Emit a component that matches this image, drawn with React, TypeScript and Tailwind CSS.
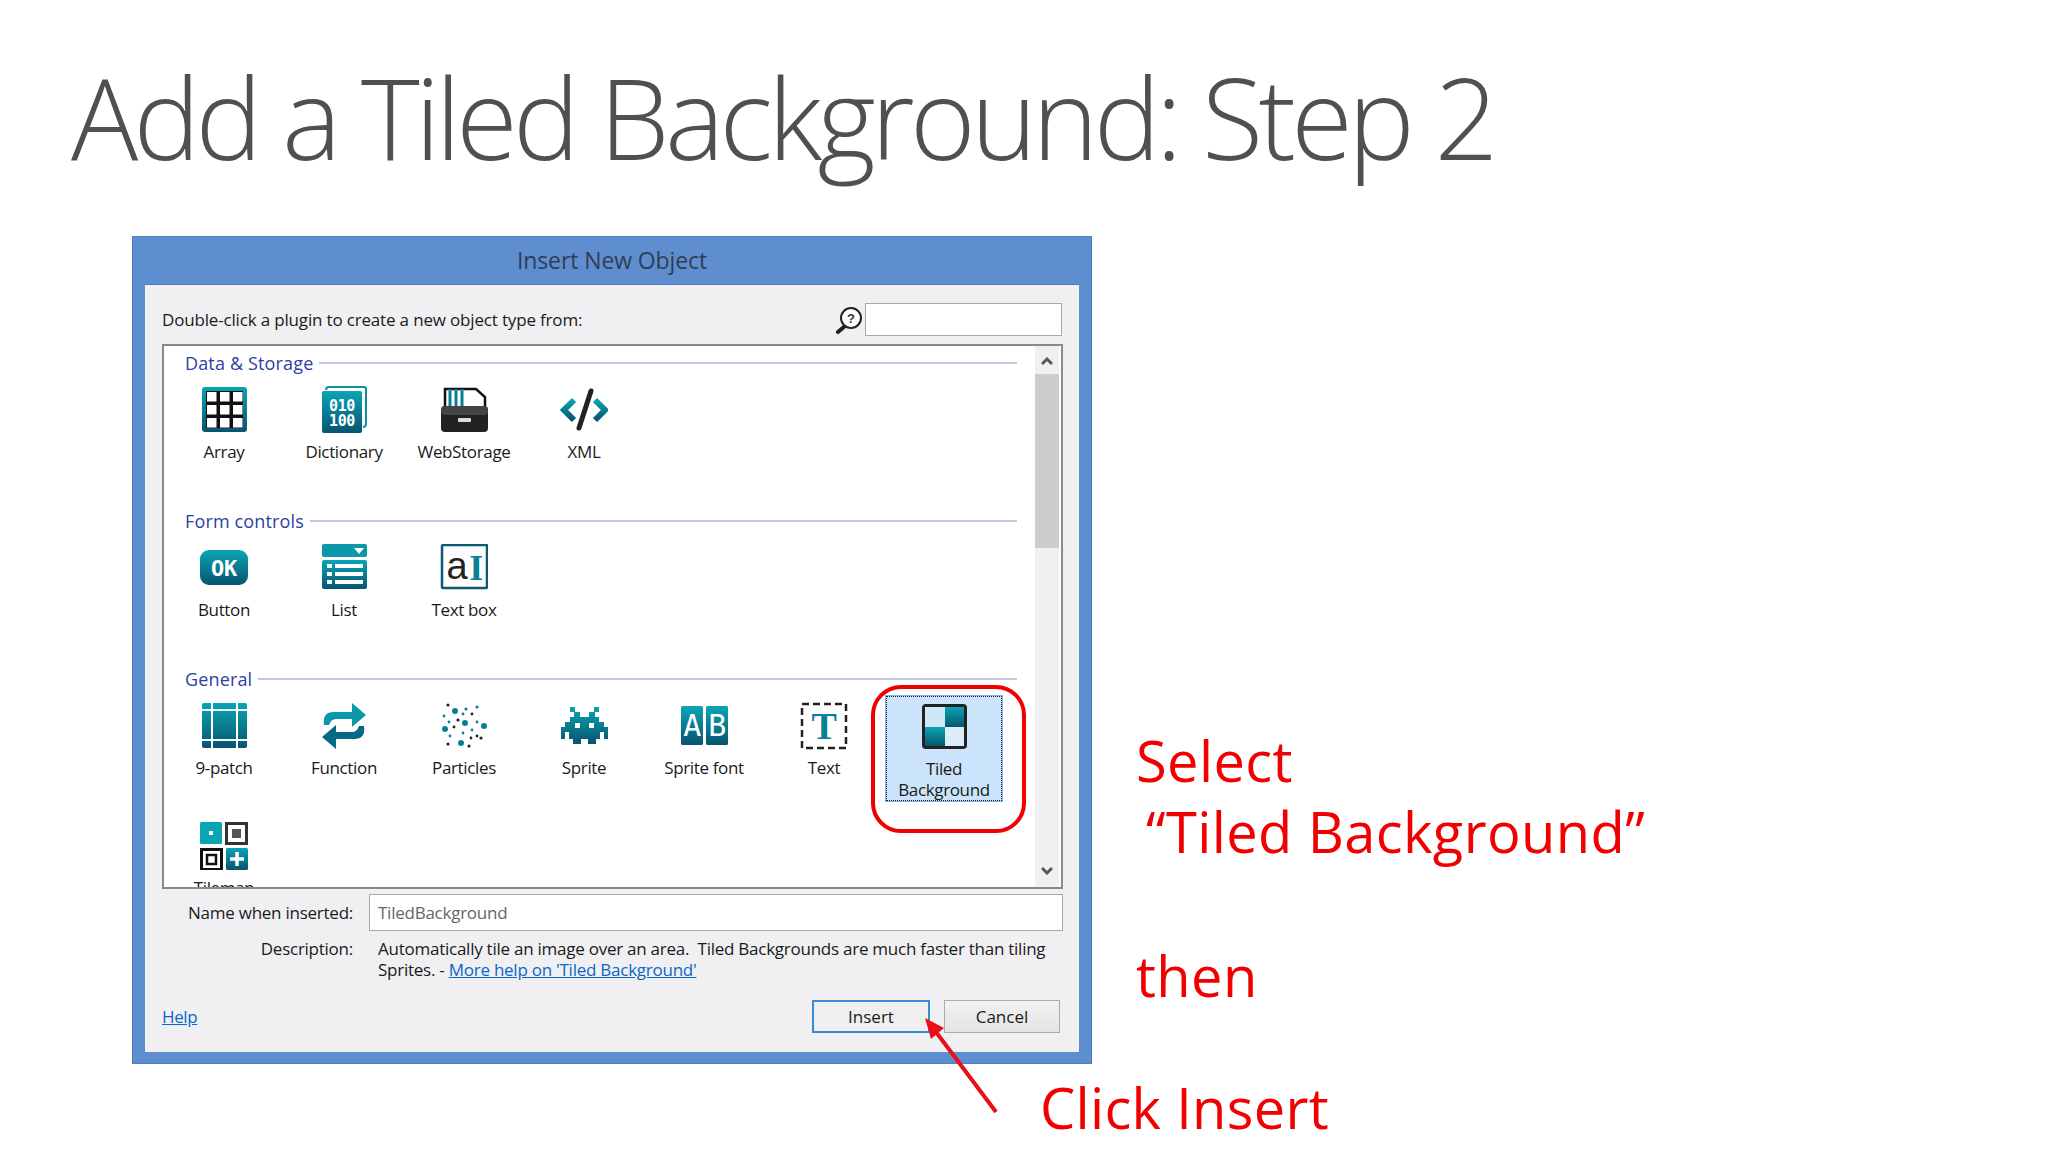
import type { ReactNode } from 'react';

const sans = "font-['Open_Sans',sans-serif]";

function Grad({ id }: { id: string }) {
  return (
    <defs>
      <linearGradient id={id} x1="0" y1="0" x2="0" y2="1">
        <stop offset="0" stopColor="#0aa5b5" />
        <stop offset="1" stopColor="#07546f" />
      </linearGradient>
    </defs>
  );
}

function Svg({ children }: { children: ReactNode }) {
  return (
    <svg width="48" height="48" viewBox="0 0 48 48" className="block">
      {children}
    </svg>
  );
}

const ArrayIcon = () => (
  <Svg>
    <Grad id="g-array" />
    <rect x="2" y="1" width="45" height="45" rx="3" fill="url(#g-array)" />
    <rect x="6" y="5" width="37" height="37" fill="#111" />
    {[7, 20, 33].map((x) =>
      [6, 19, 32].map((y) => <rect key={`${x}-${y}`} x={x} y={y} width="9.5" height="9.5" fill="#fff" />),
    )}
  </Svg>
);

const DictionaryIcon = () => (
  <Svg>
    <Grad id="g-dict" />
    <path d="M6 4 Q6 1 9 1 H44 Q46 1 46 3 V38 Q46 41 43 41" fill="none" stroke="#0b8fa3" strokeWidth="2" />
    <path d="M6 5 H40 V40" fill="#0b8fa3" opacity="0.6" />
    <rect x="2" y="5" width="40" height="42" rx="2" fill="url(#g-dict)" />
    <text x="22" y="25" textAnchor="middle" fontSize="15" fontWeight="700" fill="#fff" fontFamily="'DejaVu Sans Mono', monospace">010</text>
    <text x="22" y="40" textAnchor="middle" fontSize="15" fontWeight="700" fill="#fff" fontFamily="'DejaVu Sans Mono', monospace">100</text>
  </Svg>
);

const StorageIcon = () => (
  <Svg>
    <Grad id="g-store" />
    <path d="M5 22 V3 H36 L45 11 V24" fill="#fff" stroke="#111" strokeWidth="2.5" />
    <path d="M10 3 V20 M16 3 V20 M22 3 V20" stroke="#0a7f95" strokeWidth="3" />
    <rect x="1" y="20" width="47" height="26" rx="4" fill="#222" />
    <rect x="1" y="20" width="47" height="9" rx="4" fill="#444" />
    <rect x="18" y="32" width="13" height="4" rx="1" fill="#ddd" />
  </Svg>
);

const XmlIcon = () => (
  <Svg>
    <Grad id="g-xml" />
    <path d="M14 14 L4 24 L14 34" fill="none" stroke="url(#g-xml)" strokeWidth="6" />
    <path d="M35 14 L45 24 L35 34" fill="none" stroke="url(#g-xml)" strokeWidth="6" />
    <path d="M31 5 L19 42" stroke="#222" strokeWidth="5" strokeLinecap="round" />
  </Svg>
);

const OkIcon = () => (
  <Svg>
    <Grad id="g-ok" />
    <rect x="0" y="6" width="48" height="35" rx="9" fill="url(#g-ok)" />
    <text x="24" y="32" textAnchor="middle" fontSize="22" fontWeight="700" fill="#fff" fontFamily="'DejaVu Sans Mono', monospace">OK</text>
  </Svg>
);

const ListIcon = () => (
  <Svg>
    <Grad id="g-list" />
    <rect x="2" y="0" width="45" height="13" rx="2" fill="#0a98aa" />
    <path d="M34 4 H44 L39 10 Z" fill="#fff" />
    <rect x="2" y="16" width="45" height="29" rx="2" fill="url(#g-list)" />
    {[20, 28, 36].map((y) => (
      <g key={y} fill="#fff">
        <rect x="7" y={y} width="5" height="4" />
        <rect x="15" y={y} width="28" height="4" />
      </g>
    ))}
  </Svg>
);

const TextBoxIcon = () => (
  <Svg>
    <rect x="2" y="1" width="45" height="43" rx="1" fill="#fff" stroke="#0a5a75" strokeWidth="2.5" />
    <text x="17" y="35" textAnchor="middle" fontSize="38" fontWeight="500" fill="#222" fontFamily="'Liberation Sans', sans-serif">a</text>
    <text x="36" y="36" textAnchor="middle" fontSize="36" fontWeight="700" fill="#0b7f95" fontFamily="'Liberation Serif', serif">I</text>
  </Svg>
);

const NinePatchIcon = () => (
  <Svg>
    <Grad id="g-nine" />
    <rect x="2" y="1" width="45" height="45" rx="2" fill="url(#g-nine)" />
    <path d="M12 0 V47 M37 0 V47 M1 8 H48 M1 38 H48" stroke="#fff" strokeWidth="2" />
  </Svg>
);

const FunctionIcon = () => (
  <Svg>
    <Grad id="g-fn" />
    <path d="M4 23 Q2 10 14 10 H32 V1 L46 13 L32 25 V17 H16 Q11 17 9 23 Z" fill="#0a98aa" />
    <path d="M44 24 Q46 37 34 37 H16 V47 L2 35 L16 23 V30 H32 Q37 30 39 24 Z" fill="#076a85" />
  </Svg>
);

const particles: [number, number, number, string][] = [
  [7, 3, 1.6, '#222'], [14, 9, 3, '#0a7f95'], [25, 7, 1.6, '#0a7f95'], [36, 5, 1.6, '#0a7f95'],
  [3, 14, 1.4, '#0a7f95'], [22, 12, 1.4, '#0a7f95'], [31, 12, 1.4, '#222'], [17, 18, 1.6, '#222'],
  [8, 20, 1.4, '#0a7f95'], [24, 21, 3, '#0a7f95'], [36, 20, 1.4, '#0a7f95'], [43, 24, 3, '#0a7f95'],
  [4, 27, 3, '#0a7f95'], [13, 25, 1.4, '#222'], [22, 31, 1.4, '#0a7f95'], [31, 28, 1.4, '#0a7f95'],
  [9, 34, 1.4, '#0a7f95'], [30, 36, 1.4, '#222'], [7, 42, 1.6, '#222'], [20, 41, 3, '#0a7f95'],
  [28, 44, 1.6, '#222'], [36, 34, 1.4, '#222'], [40, 36, 1.6, '#222'],
];

const ParticlesIcon = () => (
  <Svg>
    {particles.map(([cx, cy, r, fill], i) => (
      <circle key={i} cx={cx + 1} cy={cy} r={r} fill={fill} />
    ))}
  </Svg>
);

const SpriteIcon = () => (
  <Svg>
    <Grad id="g-sprite" />
    <path
      fill="url(#g-sprite)"
      fillRule="evenodd"
      d="M10 5 H15 V10 H20 V15 H29 V10 H34 V5 H39 V10 H35 V15 H39 V20 H44 V25 H48 V37 H44 V30 H40 V37 H36 V42 H28 V37 H21 V42 H13 V37 H9 V30 H5 V37 H1 V25 H5 V20 H10 V15 H14 V10 H10 Z M15 21 V26 H20 V21 Z M29 21 V26 H34 V21 Z"
    />
  </Svg>
);

const SpriteFontIcon = () => (
  <Svg>
    <Grad id="g-font" />
    <rect x="1" y="4" width="22" height="39" rx="1.5" fill="url(#g-font)" />
    <rect x="26" y="4" width="22" height="39" rx="1.5" fill="url(#g-font)" />
    <text x="12" y="34" textAnchor="middle" fontSize="30" fill="#fff" fontFamily="'DejaVu Sans Mono', monospace">A</text>
    <text x="37" y="34" textAnchor="middle" fontSize="30" fill="#fff" fontFamily="'DejaVu Sans Mono', monospace">B</text>
  </Svg>
);

const TextIcon = () => (
  <Svg>
    <rect x="2" y="2" width="44" height="44" fill="none" stroke="#222" strokeWidth="2.5" strokeDasharray="7 4" />
    <text x="24" y="37" textAnchor="middle" fontSize="38" fontWeight="700" fill="#0b7f95" fontFamily="'Liberation Serif', serif">T</text>
  </Svg>
);

const TiledIcon = () => (
  <Svg>
    <Grad id="g-tiled" />
    <rect x="2" y="1" width="45" height="45" rx="4" fill="#222" />
    <rect x="5" y="4" width="20" height="20" fill="#cfe8f8" />
    <rect x="25" y="4" width="19" height="20" fill="url(#g-tiled)" />
    <rect x="5" y="24" width="20" height="19" fill="url(#g-tiled)" />
    <rect x="25" y="24" width="19" height="19" fill="#dcecf8" />
  </Svg>
);

const TilemapIcon = () => (
  <Svg>
    <Grad id="g-map" />
    <rect x="0" y="0" width="22" height="22" rx="1.5" fill="#0aa5b5" />
    <rect x="9" y="9" width="4" height="4" fill="#fff" />
    <rect x="26.5" y="1.5" width="20" height="20" fill="#fff" stroke="#333" strokeWidth="3" />
    <rect x="32" y="7" width="9" height="9" fill="#555" />
    <rect x="1.5" y="27.5" width="20" height="20" fill="#fff" stroke="#111" strokeWidth="3" />
    <rect x="7" y="33" width="9" height="9" fill="none" stroke="#111" strokeWidth="2.5" />
    <rect x="26" y="26" width="22" height="22" rx="1.5" fill="url(#g-map)" />
    <path d="M37 30 V44 M30 37 H44" stroke="#fff" strokeWidth="3.5" />
  </Svg>
);

function Chevron({ up }: { up?: boolean }) {
  return (
    <svg width="12" height="10" viewBox="0 0 12 10">
      <path d={up ? 'M1 8 L6 3 L11 8' : 'M1 2 L6 7 L11 2'} fill="none" stroke="#555" strokeWidth="3" />
    </svg>
  );
}

type Item = { label: string; icon: ReactNode; selected?: boolean };

function Plugin({ label, icon, selected }: Item) {
  return (
    <div
      className={`mx-[2px] flex flex-col items-center self-start pt-[6px] text-center text-[17px] leading-[21px] tracking-[-0.35px] text-[#1a1a1a] ${
        selected ? 'border border-dotted border-[#0d1b2a] bg-[#cce4fb] pt-[5px] outline outline-[#7fb2e5]' : ''
      }`}
    >
      {icon}
      <span className="mt-[7px]">{label}</span>
    </div>
  );
}

function Section({ title, items, rowHeight }: { title: string; items: Item[]; rowHeight: string }) {
  return (
    <section className={rowHeight}>
      <div className="flex h-[34px] items-center gap-[6px] pr-[18px] pl-[21px]">
        <span className="text-[18px] tracking-[0.15px] text-[#2b3fa5]">{title}</span>
        <div className="h-[2px] flex-1 bg-[#bcc8e6]" />
      </div>
      <div className="grid grid-cols-[repeat(7,120px)] auto-rows-[120px]">
        {items.map((item) => (
          <Plugin key={item.label} {...item} />
        ))}
      </div>
    </section>
  );
}

export default function App() {
  return (
    <div className={`relative h-[1152px] w-[2048px] overflow-hidden bg-white ${sans}`}>
      <h1 className="flex h-[236px] items-start pt-[42px] pl-[71px] text-[112px] leading-[150px] font-light tracking-[-4.7px] text-[#505050]">
        Add a Tiled Background: Step 2
      </h1>

      <div className="flex items-start">
        {/* Dialog */}
        <div className="ml-[132px] flex h-[828px] w-[960px] flex-col border border-[#4f7fba] bg-[#5e8ecf]">
          <div className="flex h-[47px] items-center justify-center text-[23px] tracking-[-0.1px] text-[#2f3e55]">
            Insert New Object
          </div>
          <div className="mx-[12px] flex h-[768px] flex-col border-t border-[#4f7fba] bg-[#f0f0f3] pr-[16px] pl-[17px] text-[#1a1a1a]">
            <div className="flex h-[59px] items-center justify-between pt-[10px]">
              <span className="text-[17px] tracking-[-0.17px]">Double-click a plugin to create a new object type from:</span>
              <div className="flex items-center gap-[2px] pr-[1px]">
                <svg width="28" height="28" viewBox="0 0 28 28">
                  <path d="M10 20 L3 26" stroke="#222" strokeWidth="4" strokeLinecap="round" />
                  <circle cx="16" cy="12" r="10" fill="#fff" stroke="#222" strokeWidth="2" />
                  <text x="16" y="17" textAnchor="middle" fontSize="13" fontWeight="700" fill="#333" fontFamily="'Liberation Sans', sans-serif">?</text>
                </svg>
                <div className="h-[33px] w-[197px] border border-[#a8a8a8] bg-white" />
              </div>
            </div>

            {/* Plugin list */}
            <div className="flex h-[545px] border-2 border-[#8a8a8a] bg-white">
              <div className="flex-1 overflow-hidden">
                <Section
                  title="Data & Storage"
                  rowHeight="h-[158px]"
                  items={[
                    { label: 'Array', icon: <ArrayIcon /> },
                    { label: 'Dictionary', icon: <DictionaryIcon /> },
                    { label: 'WebStorage', icon: <StorageIcon /> },
                    { label: 'XML', icon: <XmlIcon /> },
                  ]}
                />
                <Section
                  title="Form controls"
                  rowHeight="h-[158px]"
                  items={[
                    { label: 'Button', icon: <OkIcon /> },
                    { label: 'List', icon: <ListIcon /> },
                    { label: 'Text box', icon: <TextBoxIcon /> },
                  ]}
                />
                <Section
                  title="General"
                  rowHeight="h-[240px]"
                  items={[
                    { label: '9-patch', icon: <NinePatchIcon /> },
                    { label: 'Function', icon: <FunctionIcon /> },
                    { label: 'Particles', icon: <ParticlesIcon /> },
                    { label: 'Sprite', icon: <SpriteIcon /> },
                    { label: 'Sprite font', icon: <SpriteFontIcon /> },
                    { label: 'Text', icon: <TextIcon /> },
                    { label: 'Tiled Background', icon: <TiledIcon />, selected: true },
                    { label: 'Tilemap', icon: <TilemapIcon /> },
                  ]}
                />
              </div>
              <div className="mr-[2px] flex w-[24px] flex-col items-center bg-[#f0f0f0]">
                <div className="flex h-[28px] items-center pt-[2px]">
                  <Chevron up />
                </div>
                <div className="h-[174px] w-full bg-[#cdcdcd]" />
                <div className="flex-1" />
                <div className="flex h-[28px] items-center pb-[4px]">
                  <Chevron />
                </div>
              </div>
            </div>

            {/* Details */}
            <div className="mt-[5px] grid grid-cols-[191px_1fr] gap-x-[16px] text-[17px] tracking-[-0.25px]">
              <span className="flex h-[37px] items-center justify-end">Name when inserted:</span>
              <div className="flex h-[37px] items-center border border-[#a8a8a8] bg-white pl-[8px] text-[#666]">TiledBackground</div>
              <span className="mt-[7px] text-right leading-[21px]">Description:</span>
              <p className="mt-[7px] pr-[14px] pl-[9px] leading-[21px]">
                Automatically tile an image over an area.&nbsp; Tiled Backgrounds are much faster than tiling Sprites. -{' '}
                <span className="text-[#0b66c8] underline">More help on 'Tiled Background'</span>
              </p>
            </div>

            <div className="mt-[20px] flex items-center">
              <span className="flex-1 text-[17px] tracking-[-0.4px] text-[#0b66c8] underline">Help</span>
              <button className="h-[33px] w-[118px] border-2 border-[#3a8ad4] bg-[#efefef] text-[17px]">Insert</button>
              <button className="mr-[3px] ml-[14px] h-[33px] w-[116px] border border-[#acacac] bg-gradient-to-b from-[#f2f2f2] to-[#e4e4e4] text-[17px]">
                Cancel
              </button>
            </div>
          </div>
        </div>

        {/* Instructions */}
        <div className="ml-[44px] pt-[489px] text-[56px] leading-[71px] tracking-[0.4px] text-[#f00000]">
          <div>Select</div>
          <div className="pl-[10px]">“Tiled Background”</div>
          <div className="mt-[73px]">then</div>
        </div>
      </div>

      {/* Annotations over the dialog */}
      <div className="absolute top-[685px] left-[871px] h-[148px] w-[155px] rounded-[30px] border-4 border-[#f00000]" />
      <svg className="absolute top-[1000px] left-[910px]" width="100" height="120" viewBox="0 0 100 120">
        <path d="M86 112 L20 24" stroke="#e8101a" strokeWidth="4" />
        <path d="M15 18 L34 28 L21 39 Z" fill="#e8101a" />
      </svg>
      <div className="absolute top-[1072px] left-[1040px] text-[56px] leading-[71px] tracking-[0.3px] text-[#f00000]">Click Insert</div>
    </div>
  );
}
